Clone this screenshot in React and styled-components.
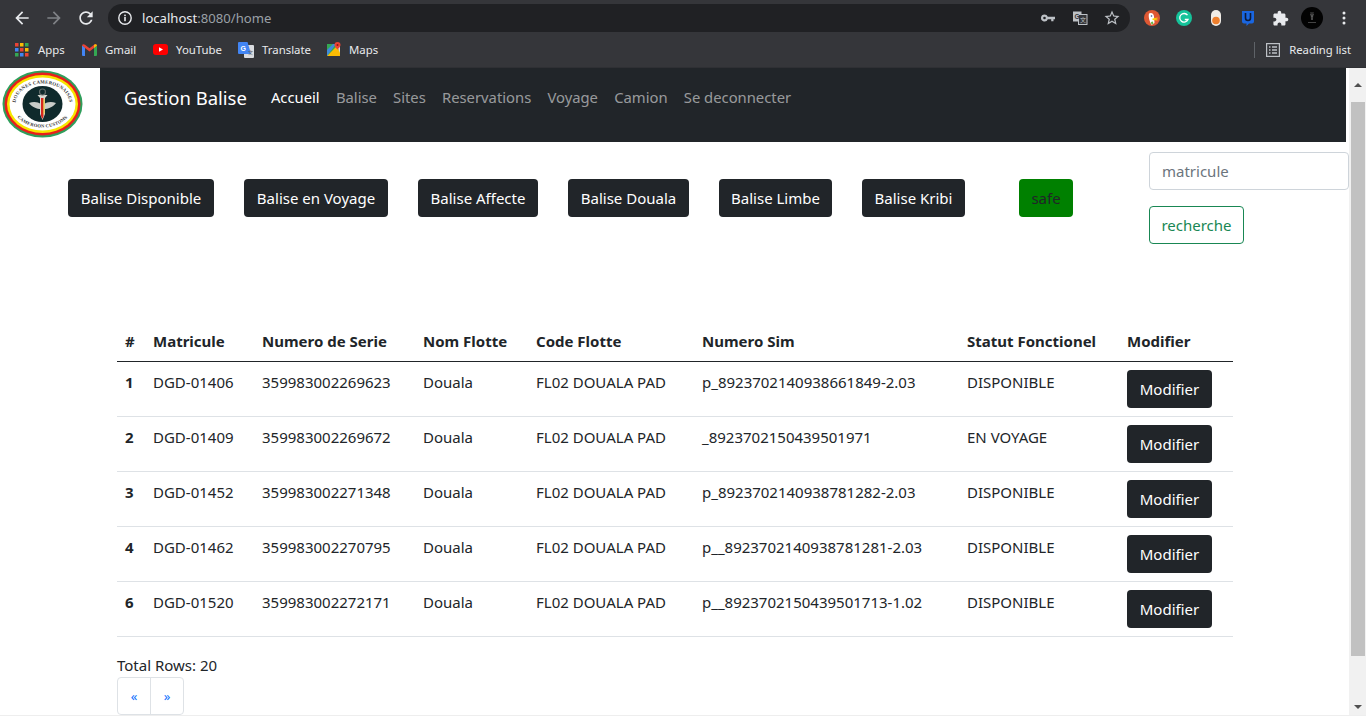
import React from 'react'
import styled, { createGlobalStyle } from 'styled-components'

const FONT = `"Noto Sans", "Open Sans", "Liberation Sans", sans-serif`

const Global = createGlobalStyle`
  html, body {
    margin: 0;
    height: 716px;
    overflow: hidden;
    background: white;
    font-family: ${FONT};
    color: #212529;
  }
  * { box-sizing: border-box; }
`

const Wrap = styled.div`
  height: 716px;
  display: flex;
  flex-direction: column;
  overflow: hidden;
`

/* browser chrome */
const Toolbar = styled.div`
  height: 36px;
  background: #35363a;
  display: flex;
  align-items: center;
  padding: 0 6px;
`
const Slot = styled.div`
  width: 32px;
  height: 28px;
  flex: none;
  display: flex;
  align-items: center;
  justify-content: center;
`
const Omnibox = styled.div`
  flex: 1;
  height: 28px;
  margin: 0 6px;
  background: #202124;
  border-radius: 14px;
  display: flex;
  align-items: center;
  padding: 0 2px 0 1px;
`
const Url = styled.div`
  flex: 1;
  margin-left: 1px;
  font-size: 13.1px;
  color: #9aa0a6;
  b {
    font-weight: 400;
    color: #e8eaed;
  }
`
const Bookmarks = styled.div`
  height: 32px;
  background: #35363a;
  display: flex;
  align-items: center;
  padding: 0 0 4px 15px;
  color: #e8eaed;
  font-size: 11.4px;
  border-bottom: 1px solid #2f3034;
`
const Bookmark = styled.div`
  width: ${p => p.$w}px;
  display: flex;
  align-items: center;
  gap: ${p => p.$gap || 8}px;
  flex: none;
`
const ReadingList = styled.div`
  margin-left: auto;
  height: 16px;
  border-left: 1px solid #5f6368;
  display: flex;
  align-items: center;
  gap: 9px;
  padding: 0 15px 0 11px;
  font-size: 11.3px;
`

/* page */
const Viewport = styled.div`
  flex: 1;
  min-height: 0;
  display: flex;
  border-bottom: 1px solid #eeeeee;
`
const Page = styled.div`
  width: 1349px;
  flex: none;
  overflow: hidden;
`
const Navbar = styled.div`
  width: 1346px;
  height: 74px;
  background: #212529;
  display: flex;
  align-items: flex-start;
`
const LogoBox = styled.div`
  width: 100px;
  height: 74px;
  background: white;
  flex: none;
`
const Brand = styled.div`
  margin: 16px 0 0 24px;
  font-size: 18.5px;
  line-height: 28px;
  color: white;
`
const NavLinks = styled.div`
  display: flex;
  margin: 17px 0 0 24px;
  gap: 16.2px;
`
const NavLink = styled.span`
  font-size: 14.8px;
  line-height: 24px;
  color: ${p => (p.$active ? 'white' : 'rgba(255, 255, 255, 0.55)')};
`
const ActionRow = styled.div`
  display: flex;
  align-items: flex-start;
  padding-left: 68px;
`
const ButtonGroup = styled.div`
  display: flex;
  gap: 30px;
  margin-top: 37px;
`
const DarkButton = styled.div`
  width: ${p => p.$w}px;
  height: 38px;
  flex: none;
  background: #212529;
  border-radius: 4px;
  color: white;
  font-size: 15px;
  display: flex;
  align-items: center;
  justify-content: center;
`
const SafeBadge = styled(DarkButton)`
  margin: 37px 0 0 54px;
  background: green;
  color: #212529;
`
const SearchForm = styled.div`
  margin-left: auto;
  width: 200px;
  padding-top: 10px;
`
const SearchInput = styled.input`
  display: block;
  width: 200px;
  height: 38px;
  border: 1px solid #ced4da;
  border-radius: 4px;
  padding: 0 12px;
  font: 15px ${FONT};
  &::placeholder {
    color: #6c757d;
    opacity: 1;
  }
`
const SearchButton = styled.div`
  width: 95px;
  height: 38px;
  margin-top: 16px;
  border: 1px solid #198754;
  border-radius: 4px;
  color: #198754;
  font-size: 15px;
  display: flex;
  align-items: center;
  justify-content: center;
`
const TableWrap = styled.div`
  margin: 77px 0 0 117px;
  width: 1116px;
`
const Table = styled.table`
  width: 1116px;
  table-layout: fixed;
  border-collapse: collapse;
  font-size: 15px;
  line-height: 24px;
  th, td {
    padding: 8px;
    text-align: left;
    vertical-align: top;
    border-bottom: 1px solid #dee2e6;
  }
  th {
    font-weight: 700;
    font-size: 15px;
    border-bottom-color: #212529;
  }
  td:first-child {
    font-weight: 700;
  }
`
const RowButton = styled.div`
  width: 85px;
  height: 38px;
  background: #212529;
  border-radius: 4px;
  color: white;
  display: flex;
  align-items: center;
  justify-content: center;
`
const TotalRows = styled.div`
  margin-top: 16px;
  font-size: 15px;
  line-height: 24px;
`
const Pagination = styled.div`
  display: flex;
  width: 67px;
  height: 38px;
  border: 1px solid #dee2e6;
  border-radius: 4px;
`
const PageLink = styled.div`
  flex: 1;
  display: flex;
  align-items: center;
  justify-content: center;
  color: #0d6efd;
  font-size: 13px;
  & + & {
    border-left: 1px solid #dee2e6;
  }
`

/* scrollbar */
const Scrollbar = styled.div`
  flex: 1;
  background: #f1f1f1;
  display: flex;
  flex-direction: column;
  align-items: center;
`
const ScrollButton = styled.div`
  height: ${p => p.$h}px;
  flex: none;
  display: flex;
  align-items: center;
  justify-content: center;
`
const Arrow = styled.div`
  width: 0;
  height: 0;
  border-left: 4px solid transparent;
  border-right: 4px solid transparent;
  ${p => (p.$down ? 'border-top' : 'border-bottom')}: 4px solid #505050;
`
const Thumb = styled.div`
  width: 14px;
  height: 554px;
  background: #c1c1c1;
  flex: none;
`
const Spacer = styled.div`
  flex: 1;
`

const Icon = ({ d, color = '#e8eaed', size = 24 }) => (
  <svg width={size} height={size} viewBox="0 0 24 24" fill={color}>
    <path d={d} />
  </svg>
)

const ARROW = 'M20 11H7.83l5.59-5.59L12 4l-8 8 8 8 1.41-1.41L7.83 13H20v-2z'
const RELOAD =
  'M17.65 6.35C16.2 4.9 14.21 4 12 4c-4.42 0-7.99 3.58-7.99 8s3.57 8 7.99 8c3.73 0 6.84-2.55 7.73-6h-2.08c-.82 2.33-3.04 4-5.65 4-3.31 0-6-2.69-6-6s2.69-6 6-6c1.66 0 3.14.69 4.22 1.78L13 11h7V4l-2.35 2.35z'
const PUZZLE =
  'M20.5 11H19V7c0-1.1-.9-2-2-2h-4V3.5C13 2.12 11.88 1 10.5 1S8 2.12 8 3.5V5H4c-1.1 0-1.99.9-1.99 2v3.8H3.5c1.49 0 2.7 1.21 2.7 2.7s-1.21 2.7-2.7 2.7H2V20c0 1.1.9 2 2 2h3.8v-1.5c0-1.49 1.21-2.7 2.7-2.7 1.49 0 2.7 1.21 2.7 2.7V22H17c1.1 0 2-.9 2-2v-4h1.5c1.38 0 2.5-1.12 2.5-2.5S21.88 11 20.5 11z'
const STAR =
  'M22 9.24l-7.19-.62L12 2 9.19 8.63 2 9.24l5.46 4.73L5.82 21 12 17.27 18.18 21l-1.63-7.03L22 9.24zM12 15.4l-3.76 2.27 1-4.28-3.32-2.88 4.38-.38L12 6.1l1.71 4.04 4.38.38-3.32 2.88 1 4.28L12 15.4z'

const InfoIcon = () => (
  <svg width="16" height="16" viewBox="0 0 16 16" fill="none">
    <circle cx="8" cy="8" r="6.2" stroke="#e8eaed" strokeWidth="1.4" />
    <rect x="7.2" y="7" width="1.6" height="4.2" fill="#e8eaed" />
    <rect x="7.2" y="4.6" width="1.6" height="1.6" fill="#e8eaed" />
  </svg>
)
const KeyIcon = () => (
  <svg width="16" height="16" viewBox="0 0 16 16" fill="#bdc1c6">
    <path d="M4.5 4.5a3.5 3.5 0 0 1 3.3 2.3H15v2.4h-1.5v2h-2.3v-2H7.8a3.5 3.5 0 1 1-3.3-4.7zm0 2.2a1.3 1.3 0 1 0 0 2.6 1.3 1.3 0 0 0 0-2.6z" />
  </svg>
)
const TranslateIcon = () => (
  <svg width="16" height="16" viewBox="0 0 16 16">
    <rect x="1" y="1.5" width="8.5" height="10" fill="#bdc1c6" />
    <rect x="6.5" y="4.5" width="8.5" height="10" fill="#35363a" stroke="#bdc1c6" />
    <text x="2.5" y="9" fontSize="6.5" fontWeight="700" fill="#35363a" fontFamily="Liberation Sans, sans-serif">G</text>
    <text x="8" y="12" fontSize="6" fill="#bdc1c6" fontFamily="Noto Sans CJK SC, sans-serif">文</text>
  </svg>
)
const DuckIcon = () => (
  <svg width="16" height="16" viewBox="0 0 16 16">
    <circle cx="8" cy="8" r="8" fill="#de5833" />
    <path d="M5 3.5c2.5-1.5 5 .5 5 3l.5 6.5-3 2C6 12 4 7 5 3.5z" fill="#fff" />
    <circle cx="7.5" cy="6" r=".8" fill="#2d4f8e" />
    <path d="M8.5 8.5l5-1v1l-2.5.5 2.5.5v1l-5-.5z" fill="#fdd20a" />
    <path d="M7 12l2-.5.3 2.5-2 .5z" fill="#65bc46" />
  </svg>
)
const GrammarlyIcon = () => (
  <svg width="16" height="16" viewBox="0 0 16 16" fill="none">
    <circle cx="8" cy="8" r="8" fill="#15c39a" />
    <path d="M11.5 5.2A4.3 4.3 0 1 0 12 9.5H8.8" stroke="#fff" strokeWidth="1.3" />
  </svg>
)
const ToggleIcon = () => (
  <svg width="12" height="16" viewBox="0 0 12 16">
    <rect x="1" y="0" width="10" height="16" rx="5" fill="#f1ece6" />
    <circle cx="6" cy="10.5" r="3.8" fill="#ee7f2d" />
  </svg>
)
const ShieldIcon = () => (
  <svg width="14" height="16" viewBox="0 0 14 16">
    <path d="M1 1h12v10.5a2 2 0 0 1-2 2H8L5.5 16v-2.5H3a2 2 0 0 1-2-2z" fill="#1a66e0" />
    <path d="M4.5 3v5a2.5 2.5 0 0 0 5 0V3" fill="none" stroke="#0d1b3a" strokeWidth="1.6" />
  </svg>
)
const AvatarIcon = () => (
  <svg width="22" height="22" viewBox="0 0 22 22">
    <circle cx="11" cy="11" r="11" fill="#030303" />
    <path d="M10 5l.6 8M12 5l-.6 8M9.5 7l1.5 3 1.5-3" stroke="#6a6a6a" strokeWidth=".7" fill="none" />
    <rect x="7" y="15" width="8" height=".8" fill="#555" />
  </svg>
)
const MenuIcon = () => (
  <svg width="16" height="16" viewBox="0 0 16 16" fill="#e8eaed">
    <circle cx="8" cy="3" r="1.5" />
    <circle cx="8" cy="8" r="1.5" />
    <circle cx="8" cy="13" r="1.5" />
  </svg>
)
const AppsIcon = () => {
  const colors = ['#ea4335', '#fbbc04', '#34a853', '#4285f4', '#ea4335', '#fbbc04', '#34a853', '#4285f4', '#ea4335']
  return (
    <svg width="14" height="14" viewBox="0 0 14 14">
      {colors.map((c, i) => (
        <rect key={i} x={(i % 3) * 5} y={Math.floor(i / 3) * 5} width="3.5" height="3.5" fill={c} />
      ))}
    </svg>
  )
}
const GmailIcon = () => (
  <svg width="15" height="12" viewBox="0 0 15 12">
    <path d="M0 1.5 3 3v9H1a1 1 0 0 1-1-1z" fill="#4285f4" />
    <path d="M15 1.5 12 3v9h2a1 1 0 0 0 1-1z" fill="#34a853" />
    <path d="M0 1.5C.5 0 2 0 3 .8L7.5 4.2 12 .8c1-.8 2.5-.8 3 .7L12 4 7.5 7.4 3 4z" fill="#ea4335" />
    <path d="M12 .8c1-.8 2.5-.8 3 .7L12 4z" fill="#fbbc04" />
  </svg>
)
const YoutubeIcon = () => (
  <svg width="15" height="11" viewBox="0 0 15 11">
    <rect width="15" height="11" rx="3" fill="#f00" />
    <path d="M6 3.2 10 5.5 6 7.8z" fill="#fff" />
  </svg>
)
const GTranslateIcon = () => (
  <svg width="16" height="16" viewBox="0 0 16 16">
    <rect x="6" y="3" width="10" height="13" rx="1" fill="#dadce0" />
    <path d="M1 0h8.5L13 12H1a1 1 0 0 1-1-1V1a1 1 0 0 1 1-1z" fill="#4285f4" />
    <text x="2.5" y="8.5" fontSize="7" fontWeight="700" fill="#fff" fontFamily="Liberation Sans, sans-serif">G</text>
    <text x="10" y="12" fontSize="5" fill="#5f6368" fontFamily="Noto Sans CJK SC, sans-serif">文</text>
  </svg>
)
const MapsIcon = () => (
  <svg width="15" height="16" viewBox="0 0 15 16">
    <path d="M1 2h9v12H1z" fill="#34a853" />
    <path d="M1 14 10 5l4 4v5z" fill="#fbbc04" />
    <path d="M1 14V8l6-6h3z" fill="#4285f4" opacity=".85" />
    <path d="M10 2l4 0v9z" fill="#dadce0" />
    <path d="M11.5 0a3 3 0 0 1 3 3c0 2-3 4.5-3 4.5S8.5 5 8.5 3a3 3 0 0 1 3-3z" fill="#ea4335" />
    <circle cx="11.5" cy="3" r="1" fill="#8a1b12" />
  </svg>
)
const ReadingIcon = () => (
  <svg width="14" height="14" viewBox="0 0 14 14" fill="none">
    <rect x=".6" y=".6" width="12.8" height="12.8" stroke="#bdc1c6" strokeWidth="1.2" />
    <path d="M3 4h1.5M6 4h5M3 7h1.5M6 7h5M3 10h1.5M6 10h5" stroke="#bdc1c6" strokeWidth="1.4" />
  </svg>
)
const Logo = () => (
  <svg width="100" height="74" viewBox="0 0 100 74">
    <defs>
      <path id="logoTop" d="M15.5 36 A27 20.5 0 0 1 69.5 36" />
      <path id="logoBottom" d="M12 36 A30.5 23.5 0 0 0 73 36" />
    </defs>
    <ellipse cx="42.5" cy="36" rx="40" ry="33.5" fill="#2f9e5b" />
    <ellipse cx="42.5" cy="36" rx="38" ry="31.5" fill="#e8201c" />
    <ellipse cx="42.5" cy="36" rx="35.5" ry="29" fill="#f7e600" />
    <ellipse cx="42.5" cy="36" rx="33" ry="26.5" fill="#fff" />
    <ellipse cx="42.5" cy="36" rx="20" ry="18" fill="#0f2a2c" />
    <text fontSize="4.8" fontWeight="700" fill="#333" letterSpacing=".2" fontFamily="Liberation Serif, serif">
      <textPath href="#logoTop" startOffset="50%" textAnchor="middle">DOUANES CAMEROUNAISES</textPath>
    </text>
    <text fontSize="4.6" fontWeight="700" fill="#333" letterSpacing=".25" fontFamily="Liberation Serif, serif">
      <textPath href="#logoBottom" startOffset="50%" textAnchor="middle">CAMEROON CUSTOMS</textPath>
    </text>
    <path d="M29 35c5-2 9-1 12 1v5c-4 0-9-2-12-6zM56 35c-5-2-9-1-12 1v5c4 0 9-2 12-6z" fill="#c9cdc9" />
    <path d="M37.5 27h10l-2.5 3v16l-2.5 6-2.5-6V30z" fill="#d8d8d0" />
    <path d="M41 30h2.5v18l-1 3-1.500-3z" fill="#d6261f" />
    <path d="M43.5 31h1v14l-1 2z" fill="#e6c820" />
    <circle cx="42.5" cy="24" r="3" fill="none" stroke="#5f6a68" strokeWidth="1.2" />
  </svg>
)

const BUTTONS = [
  ['Balise Disponible', 146],
  ['Balise en Voyage', 144],
  ['Balise Affecte', 120],
  ['Balise Douala', 121],
  ['Balise Limbe', 113],
  ['Balise Kribi', 103],
]
const LINKS = ['Balise', 'Sites', 'Reservations', 'Voyage', 'Camion', 'Se deconnecter']
const COLS = [28, 109, 161, 113, 166, 265, 160, 114]
const HEADS = ['#', 'Matricule', 'Numero de Serie', 'Nom Flotte', 'Code Flotte', 'Numero Sim', 'Statut Fonctionel', 'Modifier']
const ROWS = [
  ['1', 'DGD-01406', '359983002269623', 'p_8923702140938661849-2.03', 'DISPONIBLE'],
  ['2', 'DGD-01409', '359983002269672', '_8923702150439501971', 'EN VOYAGE'],
  ['3', 'DGD-01452', '359983002271348', 'p_8923702140938781282-2.03', 'DISPONIBLE'],
  ['4', 'DGD-01462', '359983002270795', 'p__8923702140938781281-2.03', 'DISPONIBLE'],
  ['6', 'DGD-01520', '359983002272171', 'p__8923702150439501713-1.02', 'DISPONIBLE'],
]

const App = () => {
  return (
    <Wrap>
      <Global />
      <Toolbar>
        <Slot><Icon d={ARROW} size={20} /></Slot>
        <Slot>
          <svg width="20" height="20" viewBox="0 0 24 24" fill="#7f8286" style={{ transform: 'scaleX(-1)' }}>
            <path d={ARROW} />
          </svg>
        </Slot>
        <Slot><Icon d={RELOAD} size={20} /></Slot>
        <Omnibox>
          <Slot><InfoIcon /></Slot>
          <Url><b>localhost</b>:8080/home</Url>
          <Slot><KeyIcon /></Slot>
          <Slot><TranslateIcon /></Slot>
          <Slot><Icon d={STAR} color="#bdc1c6" size={18} /></Slot>
        </Omnibox>
        <Slot><DuckIcon /></Slot>
        <Slot><GrammarlyIcon /></Slot>
        <Slot><ToggleIcon /></Slot>
        <Slot><ShieldIcon /></Slot>
        <Slot><Icon d={PUZZLE} size={17} /></Slot>
        <Slot><AvatarIcon /></Slot>
        <Slot><MenuIcon /></Slot>
      </Toolbar>
      <Bookmarks>
        <Bookmark $w={67} $gap={9}><AppsIcon />Apps</Bookmark>
        <Bookmark $w={71}><GmailIcon />Gmail</Bookmark>
        <Bookmark $w={85}><YoutubeIcon />YouTube</Bookmark>
        <Bookmark $w={88}><GTranslateIcon />Translate</Bookmark>
        <Bookmark $w={60}><MapsIcon />Maps</Bookmark>
        <ReadingList><ReadingIcon />Reading list</ReadingList>
      </Bookmarks>
      <Viewport>
        <Page>
          <Navbar>
            <LogoBox><Logo /></LogoBox>
            <Brand>Gestion Balise</Brand>
            <NavLinks>
              <NavLink $active>Accueil</NavLink>
              {LINKS.map(l => <NavLink key={l}>{l}</NavLink>)}
            </NavLinks>
          </Navbar>
          <ActionRow>
            <ButtonGroup>
              {BUTTONS.map(([label, w]) => (
                <DarkButton key={label} $w={w}>{label}</DarkButton>
              ))}
            </ButtonGroup>
            <SafeBadge $w={54}>safe</SafeBadge>
            <SearchForm>
              <SearchInput placeholder="matricule" />
              <SearchButton>recherche</SearchButton>
            </SearchForm>
          </ActionRow>
          <TableWrap>
            <Table>
              <colgroup>
                {COLS.map((w, i) => <col key={i} width={w} />)}
              </colgroup>
              <thead>
                <tr>{HEADS.map(h => <th key={h}>{h}</th>)}</tr>
              </thead>
              <tbody>
                {ROWS.map(r => (
                  <tr key={r[0]}>
                    <td>{r[0]}</td>
                    <td>{r[1]}</td>
                    <td>{r[2]}</td>
                    <td>Douala</td>
                    <td>FL02 DOUALA PAD</td>
                    <td>{r[3]}</td>
                    <td>{r[4]}</td>
                    <td><RowButton>Modifier</RowButton></td>
                  </tr>
                ))}
              </tbody>
            </Table>
            <TotalRows>Total Rows: 20</TotalRows>
            <Pagination>
              <PageLink>«</PageLink>
              <PageLink>»</PageLink>
            </Pagination>
          </TableWrap>
        </Page>
        <Scrollbar>
          <ScrollButton $h={34}><Arrow /></ScrollButton>
          <Thumb />
          <Spacer />
          <ScrollButton $h={17}><Arrow $down /></ScrollButton>
        </Scrollbar>
      </Viewport>
    </Wrap>
  )
}

export default App
